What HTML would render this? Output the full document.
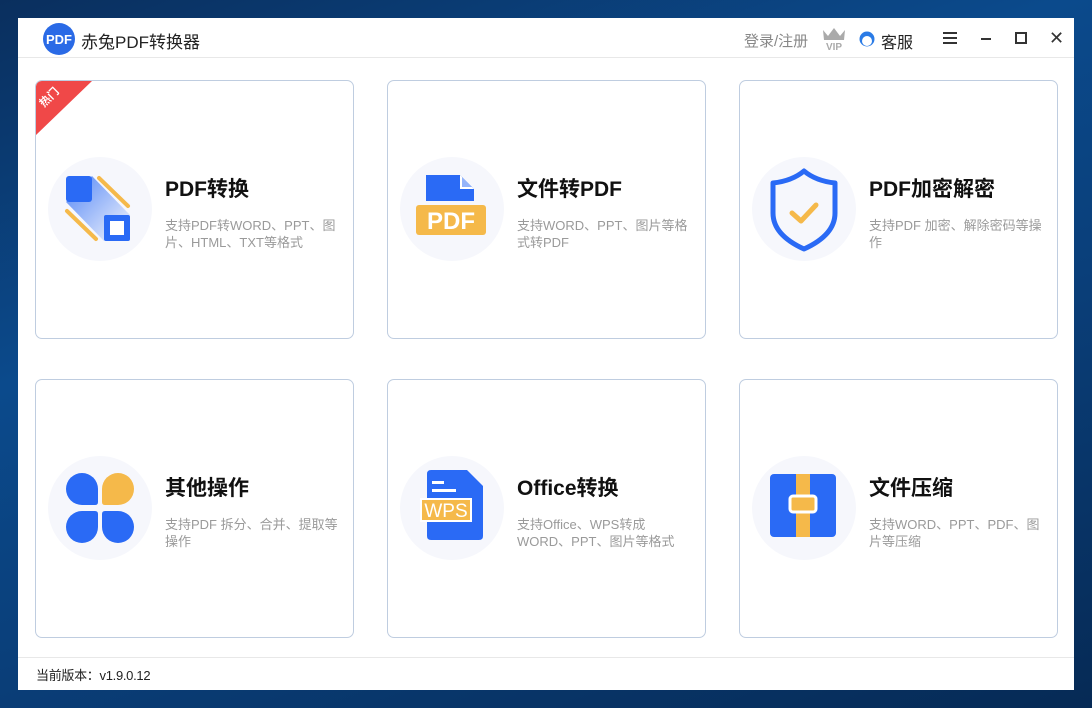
<!DOCTYPE html>
<html><head><meta charset="utf-8">
<style>
*{margin:0;padding:0;box-sizing:border-box}
body{width:1092px;height:708px;overflow:hidden;background:linear-gradient(160deg,#0a2f5e 0%,#0b4a8c 35%,#0a3f7a 60%,#062a55 100%);font-family:"Liberation Sans","Noto Sans CJK SC",sans-serif;position:relative}
.win{position:absolute;left:18px;top:18px;width:1056px;height:672px;background:#fff}
.hdr{position:absolute;left:0;top:0;width:1056px;height:40px;border-bottom:1px solid #e8e8e8}
.ftr{position:absolute;left:0;top:639px;width:1056px;height:1px;background:#e8e8e8}
.card{position:absolute;width:319px;height:259px;border:1.5px solid #bfcde0;border-radius:7px;overflow:hidden;background:#fff}
.circ{position:absolute;left:12px;top:76px;width:104px;height:104px;border-radius:50%;background:#f6f7fc}
.circ svg{position:absolute;left:0;top:0}
.t{position:absolute;left:129px;top:92px;font-size:21px;font-weight:bold;color:#111;white-space:nowrap}
.d{position:absolute;left:129px;top:136px;width:180px;font-size:13px;line-height:17px;color:#9a9a9a}
</style></head><body>
<div class="win">
 <div class="hdr">
  <svg style="position:absolute;left:24px;top:4px" width="34" height="34" viewBox="0 0 34 34"><circle cx="17" cy="17" r="16" fill="#2a6ae6"/><text x="17" y="22" text-anchor="middle" font-family="Liberation Sans" font-weight="bold" font-size="13" fill="#fff">PDF</text></svg>
  <div style="position:absolute;left:63px;top:10px;font-size:17px;color:#222">赤兔PDF转换器</div>
  <div style="position:absolute;left:726px;top:12px;font-size:15px;color:#888">登录/注册</div>
  <svg style="position:absolute;left:803px;top:7px" width="26" height="26" viewBox="0 0 26 26"><path d="M2 5 L7 11 L13 3 L19 11 L24 5 L23 15 L3 15Z" fill="#aaa"/><text x="13" y="25" text-anchor="middle" font-size="10" font-weight="bold" fill="#aaa" font-family="Liberation Sans">VIP</text></svg>
  <svg style="position:absolute;left:841px;top:12px" width="16" height="17" viewBox="0 0 16 17"><circle cx="8" cy="9" r="7.5" fill="#2a7be6"/><circle cx="8" cy="11" r="5" fill="#fff"/></svg>
  <div style="position:absolute;left:863px;top:11px;font-size:16px;color:#222">客服</div>
  <div style="position:absolute;left:925px;top:14px;width:14px;height:12px;border-top:2px solid #333;border-bottom:2px solid #333"><div style="margin-top:3px;height:2px;background:#333"></div></div>
  <div style="position:absolute;left:963px;top:20px;width:10px;height:2px;background:#333"></div>
  <div style="position:absolute;left:997px;top:14px;width:12px;height:12px;border:2px solid #333"></div>
  <div style="position:absolute;left:1031px;top:10px;font-size:18px;color:#333">✕</div>
 </div>

 <div class="card" style="left:17px;top:62px">
  <div style="position:absolute;left:0;top:0;width:56px;height:54px;background:#f04848;clip-path:polygon(0 0,100% 0,0 100%)"></div>
  <div style="position:absolute;left:2px;top:8px;font-size:11px;color:#fff;font-weight:bold;transform:rotate(-45deg)">热门</div>
  <div class="circ"><svg width="104" height="104" viewBox="0 0 104 104"><defs><linearGradient id="g1" x1="0" y1="0" x2="1" y2="1"><stop offset="0" stop-color="#2a6af5" stop-opacity=".8"/><stop offset="1" stop-color="#2a6af5" stop-opacity="0"/></linearGradient></defs><path d="M44 19 L82 58 L56 84 L18 45Z" fill="url(#g1)"/><rect x="18" y="19" width="26" height="26" rx="3" fill="#2a6af5"/><rect x="56" y="58" width="26" height="26" rx="2" fill="#2a6af5"/><rect x="62" y="64" width="14" height="14" fill="#fff"/><line x1="51" y1="21" x2="80" y2="49" stroke="#f5b94a" stroke-width="4" stroke-linecap="round"/><line x1="19" y1="54" x2="48" y2="82" stroke="#f5b94a" stroke-width="4" stroke-linecap="round"/></svg></div>
  <div class="t">PDF转换</div>
  <div class="d">支持PDF转WORD、PPT、图片、HTML、TXT等格式</div>
 </div>

 <div class="card" style="left:369px;top:62px">
  <div class="circ"><svg width="104" height="104" viewBox="0 0 104 104"><path d="M26 18 L60 18 L74 32 L74 44 L26 44Z" fill="#2a6af5"/><path d="M60 18 L60 32 L74 32Z" fill="#fff"/><path d="M62 20 L62 30 L72 30Z" fill="#2a6af5" opacity=".5"/><rect x="16" y="48" width="70" height="30" rx="3" fill="#f5b94a"/><text x="51" y="72" text-anchor="middle" font-family="Liberation Sans" font-weight="bold" font-size="24" fill="#fff">PDF</text></svg></div>
  <div class="t">文件转PDF</div>
  <div class="d">支持WORD、PPT、图片等格式转PDF</div>
 </div>

 <div class="card" style="left:721px;top:62px">
  <div class="circ"><svg width="104" height="104" viewBox="0 0 104 104"><path d="M52 14 Q64 24 83 26 L83 56 Q83 78 52 92 Q21 78 21 56 L21 26 Q40 24 52 14Z" fill="none" stroke="#2a6af5" stroke-width="5" stroke-linejoin="round"/><path d="M40 56 L49 64 L64 48" fill="none" stroke="#f5b94a" stroke-width="5" stroke-linecap="round" stroke-linejoin="round"/></svg></div>
  <div class="t">PDF加密解密</div>
  <div class="d">支持PDF 加密、解除密码等操作</div>
 </div>

 <div class="card" style="left:17px;top:361px">
  <div class="circ"><svg width="104" height="104" viewBox="0 0 104 104"><path d="M34 17 A16 16 0 0 0 18 33 A16 16 0 0 0 34 49 L47 49 Q50 49 50 46 L50 33 A16 16 0 0 0 34 17Z" fill="#2a6af5"/><path d="M70 17 A16 16 0 0 1 86 33 A16 16 0 0 1 70 49 L57 49 Q54 49 54 46 L54 33 A16 16 0 0 1 70 17Z" fill="#f5b94a"/><path d="M34 87 A16 16 0 0 1 18 71 A16 16 0 0 1 34 55 L47 55 Q50 55 50 58 L50 71 A16 16 0 0 1 34 87Z" fill="#2a6af5"/><path d="M70 87 A16 16 0 0 0 86 71 A16 16 0 0 0 70 55 L57 55 Q54 55 54 58 L54 71 A16 16 0 0 0 70 87Z" fill="#2a6af5"/></svg></div>
  <div class="t">其他操作</div>
  <div class="d">支持PDF 拆分、合并、提取等操作</div>
 </div>

 <div class="card" style="left:369px;top:361px">
  <div class="circ"><svg width="104" height="104" viewBox="0 0 104 104"><path d="M27 18 Q27 14 31 14 L67 14 L83 30 L83 80 Q83 84 79 84 L31 84 Q27 84 27 80Z" fill="#2a6af5"/><rect x="32" y="25" width="12" height="3" fill="#fff"/><rect x="32" y="33" width="24" height="3" fill="#fff"/><rect x="20" y="42" width="52" height="24" fill="#fff"/><rect x="22" y="44" width="48" height="20" fill="#f5b94a"/><text x="46" y="61" text-anchor="middle" font-family="Liberation Sans" font-size="19" fill="#fff">WPS</text></svg></div>
  <div class="t">Office转换</div>
  <div class="d">支持Office、WPS转成WORD、PPT、图片等格式</div>
 </div>

 <div class="card" style="left:721px;top:361px">
  <div class="circ"><svg width="104" height="104" viewBox="0 0 104 104"><rect x="18" y="18" width="66" height="63" rx="4" fill="#2a6af5"/><rect x="44" y="18" width="14" height="63" fill="#f5b94a"/><rect x="38" y="40" width="26" height="16" rx="3" fill="#f5b94a" stroke="#fff" stroke-width="3"/></svg></div>
  <div class="t">文件压缩</div>
  <div class="d">支持WORD、PPT、PDF、图片等压缩</div>
 </div>

 <div class="ftr"></div>
 <div style="position:absolute;left:18px;top:647px;font-size:13px;color:#222;letter-spacing:-0.3px">当前版本：v1.9.0.12</div>
</div>
</body></html>
